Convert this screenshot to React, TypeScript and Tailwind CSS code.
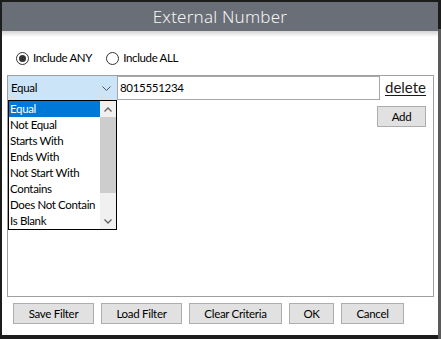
import React, { useState } from 'react';

const ops = [
  'Equal',
  'Not Equal',
  'Starts With',
  'Ends With',
  'Not Start With',
  'Contains',
  'Does Not Contain',
  'Is Blank',
];

const font = { fontFamily: 'Lato, "Noto Sans", sans-serif' };
const titleFont = { fontFamily: '"Noto Sans", "Open Sans", sans-serif' };

function Btn({ label, w }: { label: string; w: string }) {
  return (
    <button
      className={`${w} h-[21px] bg-[#e1e1e1] border border-[#adadad] text-[11.5px] tracking-[-0.3px] leading-none text-black flex items-center justify-center`}
    >
      {label}
    </button>
  );
}

function Radio({ checked, label }: { checked: boolean; label: string }) {
  return (
    <label className="flex items-center gap-[4px]">
      <span className="w-[13px] h-[13px] rounded-full border border-[#333] bg-white flex items-center justify-center">
        {checked && <span className="w-[7px] h-[7px] rounded-full bg-[#333]" />}
      </span>
      <span className="text-[11.5px] tracking-[-0.35px] text-black">{label}</span>
    </label>
  );
}

export default function App() {
  const [any] = useState(true);

  return (
    <div className="w-[441px] h-[339px] bg-[#1c1c1c] flex overflow-hidden" style={font}>
      <div className="pt-[2px] pl-[2px] flex-1 flex flex-col">
        <div className="w-[436px] h-[333px] bg-white flex flex-col">
          {/* title bar */}
          <div
            className="h-[29px] bg-[#6a6e77] flex items-center justify-center text-[17px] font-light text-[#f4f4f4] tracking-[0.2px]"
            style={titleFont}
          >
            External Number
          </div>
          <div className="h-[6px] bg-gradient-to-b from-[#d4d4d4] to-white" />

          {/* any / all */}
          <div className="flex items-center gap-[14px] pl-[14px] mt-[13px] h-[16px]">
            <Radio checked={any} label="Include ANY" />
            <Radio checked={!any} label="Include ALL" />
          </div>

          {/* criteria panel */}
          <div className="ml-[5px] mt-[9px] w-[427px] h-[222px] border border-[#a0a0a0] relative">
            <div className="flex h-[24px]">
              <div className="w-[109px] h-[24px] bg-[#cce4f7] flex items-center justify-between pl-[3px] pr-[6px] text-[11.5px] tracking-[-0.3px] text-black">
                <span>Equal</span>
                <svg width="9" height="6" viewBox="0 0 9 6" className="mt-[1px]">
                  <path d="M0.5 0.5 L4.5 4.5 L8.5 0.5" fill="none" stroke="#555" strokeWidth="1" />
                </svg>
              </div>
              <div className="w-[263px] h-[24px] border border-[#a6a6a6] flex items-center pl-[2px] text-[11.5px] tracking-[-0.3px] text-black">
                8015551234
              </div>
              <a className="ml-[5px] text-[15px] leading-[22px] text-[#1a1a1a] underline underline-offset-2">delete</a>
            </div>

            <div className="flex justify-end pr-[7px] mt-[6px]">
              <Btn label="Add" w="w-[49px]" />
            </div>

            {/* open dropdown list */}
            <div className="absolute left-0 top-[24px] w-[109px] h-[130px] border border-black bg-white flex">
              <div className="flex-1 flex flex-col">
                {ops.map((o, i) => (
                  <div
                    key={o}
                    className={`h-[16px] leading-[16px] text-[11.5px] tracking-[-0.35px] pl-[1px] whitespace-nowrap ${
                      i === 0 ? 'bg-[#0078d7] text-white' : 'text-black'
                    }`}
                  >
                    {o}
                  </div>
                ))}
              </div>
              <div className="w-[16px] bg-[#f0f0f0] flex flex-col">
                <div className="h-[16px] flex items-center justify-center">
                  <svg width="8" height="5" viewBox="0 0 8 5">
                    <path d="M0.5 4.5 L4 1 L7.5 4.5" fill="none" stroke="#606060" strokeWidth="1.3" />
                  </svg>
                </div>
                <div className="h-[76px] bg-[#cdcdcd]" />
                <div className="flex-1" />
                <div className="h-[16px] flex items-center justify-center">
                  <svg width="8" height="5" viewBox="0 0 8 5">
                    <path d="M0.5 0.5 L4 4 L7.5 0.5" fill="none" stroke="#606060" strokeWidth="1.3" />
                  </svg>
                </div>
              </div>
            </div>
          </div>

          {/* bottom buttons */}
          <div className="flex gap-[7px] pl-[11px] mt-[6px]">
            <Btn label="Save Filter" w="w-[81px]" />
            <Btn label="Load Filter" w="w-[81px]" />
            <Btn label="Clear Criteria" w="w-[93px]" />
            <Btn label="OK" w="w-[45px]" />
            <Btn label="Cancel" w="w-[63px]" />
          </div>
        </div>
      </div>
      <div className="w-[3px] bg-[#5a5a5a] mt-[29px]" />
    </div>
  );
}
